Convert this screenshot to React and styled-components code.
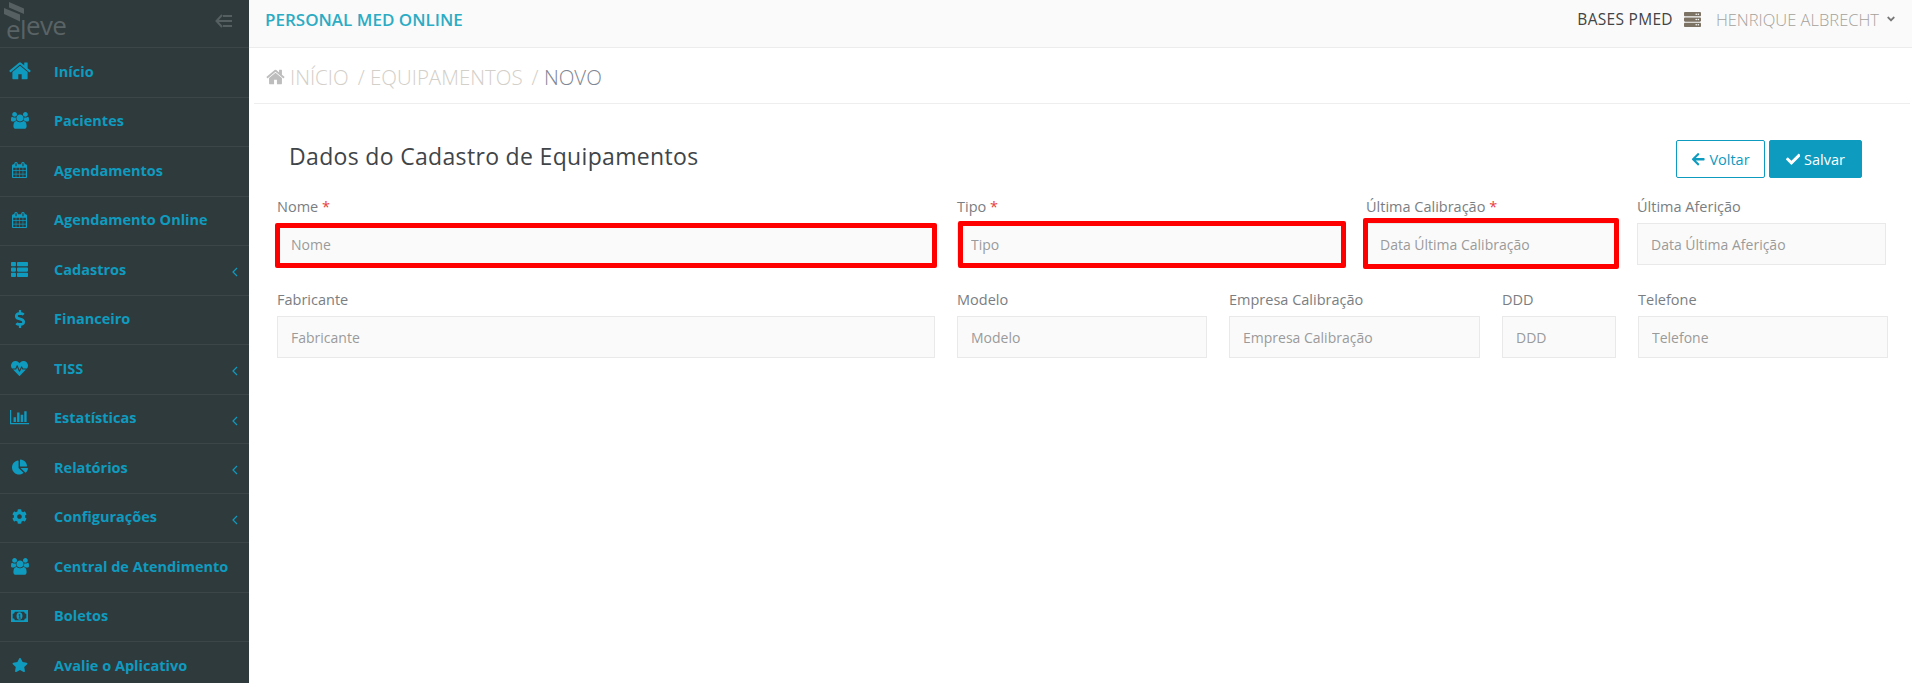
import styled, { createGlobalStyle } from "styled-components";
import {
  FaThList,
  FaDollarSign,
  FaHeartbeat,
  FaChartPie,
  FaCog,
  FaStar,
  FaAngleDown,
  FaArrowLeft,
  FaCheck,
  FaServer,
} from "react-icons/fa";

const GlobalStyle = createGlobalStyle`
  html, body {
    margin: 0;
    padding: 0;
    background: #fff;
  }
  body {
    font-family: "Open Sans", "Liberation Sans", sans-serif;
  }
  * {
    box-sizing: border-box;
  }
`;

const Shell = styled.div`
  display: flex;
  width: 100vw;
  height: 100vh;
  overflow: hidden;
`;

const Sidebar = styled.aside`
  flex: 0 0 249px;
  background: #2f3a3c;
  overflow: hidden;
`;

const Brand = styled.div`
  height: 48px;
  display: flex;
  align-items: flex-start;
  justify-content: space-between;
  padding: 2px 16px 0 4px;
  border-bottom: 1px solid #3c4648;
`;

const LogoWrap = styled.div`
  position: relative;
  width: 58px;
  height: 34px;
`;

const LogoMark = styled.svg`
  position: absolute;
  left: 0;
  top: 0;
`;

const LogoText = styled.span`
  position: absolute;
  left: 2px;
  top: 8px;
  font-size: 26px;
  line-height: 30px;
  letter-spacing: -0.6px;
  color: #5a6365;
`;

const LogoDrop = styled.span`
  position: relative;
  top: 4px;
`;

const CollapseIcon = styled.svg`
  margin-top: 12px;
`;

const NavRow = styled.a`
  display: flex;
  align-items: center;
  height: 49.5px;
  border-bottom: 1px solid #3c4648;
  padding: 0 11px 2px 0;
  color: #0f9bbf;
  font-size: 14.5px;
  font-weight: 700;
  text-decoration: none;
`;

const NavIcon = styled.span`
  flex: 0 0 39px;
  margin-right: 15px;
  display: flex;
  justify-content: center;
`;

const NavLabel = styled.span`
  flex: 1;
  white-space: nowrap;
`;

const NavArrow = styled.svg`
  margin-top: 6px;
`;

const Main = styled.main`
  flex: 1;
  min-width: 0;
  display: flex;
  flex-direction: column;
`;

const Topbar = styled.header`
  height: 48px;
  flex: none;
  display: flex;
  align-items: center;
  justify-content: space-between;
  padding: 0 15px 9px 16px;
  background: #fafafa;
  border-bottom: 1px solid #ececec;
`;

const AppName = styled.span`
  color: #2bacc4;
  font-size: 17px;
  font-weight: 600;
`;

const TopRight = styled.div`
  display: flex;
  align-items: center;
  font-size: 15.5px;
  letter-spacing: 0.3px;
  color: #444;
`;

const ServerIcon = styled(FaServer)`
  color: #7d7365;
  font-size: 17px;
  margin: 0 15px 0 11px;
`;

const UserName = styled.span`
  color: #a5a29c;
  font-size: 16.5px;
  letter-spacing: 0;
  font-weight: 300;
`;

const UserCaret = styled(FaAngleDown)`
  color: #777;
  font-size: 12px;
  margin-left: 6px;
`;

const Crumbs = styled.nav`
  height: 56px;
  flex: none;
  margin: 0 2px 0 5px;
  padding: 2px 0 0 12px;
  display: flex;
  align-items: center;
  gap: 5px;
  border-bottom: 1px solid #eee;
  font-size: 20.5px;
  font-weight: 300;
  color: #d3cfc9;
`;

const CrumbHome = styled.svg`
  width: 19px;
  height: 20px;
  fill: #bdbdbd;
`;

const CrumbSep = styled.span`
  margin-left: 4px;
`;

const CrumbCurrent = styled.span`
  color: #7f8694;
`;

const Panel = styled.section`
  padding: 36px 24px 0 28px;
`;

const PanelHead = styled.div`
  display: flex;
  justify-content: space-between;
  height: 59px;
  padding: 0 26px 0 12px;
`;

const Title = styled.h2`
  margin: 0;
  font-size: 23px;
  line-height: 32px;
  letter-spacing: 0.33px;
  font-weight: 400;
  color: #3f4548;
`;

const Actions = styled.div`
  display: flex;
  gap: 4px;
`;

const Button = styled.button`
  height: 38px;
  display: flex;
  align-items: center;
  gap: 4px;
  padding: 0 ${(props) => (props.$primary ? 16 : 14)}px;
  border: 1px solid #0d9bbf;
  border-radius: 2px;
  font: inherit;
  font-size: 14.5px;
  background: ${(props) => (props.$primary ? "#0d9bbf" : "#fff")};
  color: ${(props) => (props.$primary ? "#fff" : "#0d9bbf")};
`;

const FormRow = styled.div`
  display: flex;
  gap: 22px;
  margin-bottom: 27px;
`;

const Field = styled.div`
  flex: 0 0 ${(props) => props.$width}px;
`;

const Label = styled.label`
  display: block;
  height: 16px;
  margin-bottom: 8px;
  font-size: 14.5px;
  line-height: 16px;
  color: #7a7e82;
  white-space: nowrap;
`;

const Required = styled.span`
  color: #e8403f;
`;

const InputWrap = styled.div`
  position: relative;
`;

const Input = styled.input`
  display: block;
  width: 100%;
  height: 42px;
  padding: 0 13px;
  border: 1px solid #e9e9e9;
  background: #fafafa;
  font: inherit;
  font-size: 14px;
  color: #555;
  outline: none;

  &::placeholder {
    color: #9a9a9a;
    opacity: 1;
  }
`;

const Highlight = styled.div`
  position: absolute;
  left: ${(props) => props.$left}px;
  right: ${(props) => props.$right}px;
  top: ${(props) => props.$top}px;
  bottom: ${(props) => props.$bottom}px;
  border: 5px solid #ff0000;
  border-radius: 2px;
  pointer-events: none;
`;

const homePath =
  "M1408 992v480q0 26-19 45t-45 19h-384v-384h-256v384h-384q-26 0-45-19t-19-45v-480q0-1 .5-3t.5-3l575-474 575 474q1 2 1 6zm223-69l-62 74q-8 9-21 11h-3q-13 0-21-7l-692-577-692 577q-12 8-24 7-13-2-21-11l-62-74q-8-10-7-23.500t11-21.500l719-599q32-26 76-26t76 26l244 204v-195q0-14 9-23t23-9h192q14 0 23 9t9 23v408l219 182q10 8 11 21.500t-7 23.500z";

function DrawnIcon({ width, box, path }) {
  return (
    <svg width={width} viewBox={box} fill="currentColor">
      <path d={path} />
    </svg>
  );
}

const HomeIcon = () => <DrawnIcon width={22} box="0 0 1664 1792" path={homePath} />;

const UsersIcon = () => (
  <DrawnIcon
    width={18}
    box="0 0 1920 1792"
    path="M593 896q-162 5-265 128h-134q-82 0-138-40.500t-56-118.500q0-353 124-353 6 0 43.500 21t97.500 42.500 119 21.500q67 0 133-23-5 37-5 66 0 139 81 256zm1071 637q0 120-73 189.500t-194 69.500h-874q-121 0-194-69.500t-73-189.500q0-53 3.500-103.500t14-109 26.500-108.500 43-97.500 62-81 85.500-53.500 111.500-20q10 0 43 21.500t73 48 107 48 135 21.500 135-21.500 107-48 73-48 43-21.500q61 0 111.500 20t85.500 53.500 62 81 43 97.500 26.500 108.500 14 109 3.500 103.500zm-1024-1277q0 106-75 181t-181 75-181-75-75-181 75-181 181-75 181 75 75 181zm704 384q0 159-112.500 271.500t-271.500 112.500-271.500-112.500-112.500-271.500 112.500-271.500 271.500-112.500 271.500 112.500 112.500 271.500zm576 225q0 78-56 118.500t-138 40.500h-134q-103-123-265-128 81-117 81-256 0-29-5-66 66 23 133 23 59 0 119-21.500t97.500-42.500 43.500-21q124 0 124 353zm-128-609q0 106-75 181t-181 75-181-75-75-181 75-181 181-75 181 75 75 181z"
  />
);

const CalendarIcon = () => (
  <DrawnIcon
    width={15}
    box="0 0 1664 1792"
    path="M128 1664h288v-288h-288v288zm352 0h320v-288h-320v288zm-352-352h288v-320h-288v320zm352 0h320v-320h-320v320zm-352-384h288v-288h-288v288zm736 736h320v-288h-320v288zm-384-736h320v-288h-320v288zm768 736h288v-288h-288v288zm-384-352h320v-320h-320v320zm-352-864v-288q0-13-9.500-22.500t-22.500-9.500h-64q-13 0-22.500 9.500t-9.500 22.500v288q0 13 9.500 22.500t22.500 9.500h64q13 0 22.500-9.500t9.500-22.500zm736 864h288v-320h-288v320zm-384-384h320v-288h-320v288zm384 0h288v-288h-288v288zm32-480v-288q0-13-9.500-22.500t-22.500-9.500h-64q-13 0-22.500 9.500t-9.500 22.500v288q0 13 9.500 22.500t22.500 9.500h64q13 0 22.500-9.500t9.500-22.500zm384-64v1280q0 52-38 90t-90 38h-1408q-52 0-90-38t-38-90v-1280q0-52 38-90t90-38h128v-96q0-66 47-113t113-47h64q66 0 113 47t47 113v96h384v-96q0-66 47-113t113-47h64q66 0 113 47t47 113v96h128q52 0 90 38t38 90z"
  />
);

const BarsIcon = () => (
  <DrawnIcon
    width={19}
    box="0 128 2048 1664"
    path="M640 896v512h-256v-512h256zm384-512v1024h-256v-1024h256zm1024 1152v128h-2048v-1536h128v1408h1920zm-640-896v768h-256v-768h256zm384-384v1152h-256v-1152h256z"
  />
);

const MoneyIcon = () => (
  <svg width="17" height="12" viewBox="0 0 20 14" fill="currentColor">
    <path
      fillRule="evenodd"
      d="M0 0h20v14H0zM4.500 2a2.500 2.500 0 0 1-2.500 2.500v5A2.500 2.500 0 0 1 4.500 12h11a2.500 2.500 0 0 1 2.500-2.500v-5A2.500 2.500 0 0 1 15.500 2z"
    />
    <path fillRule="evenodd" d="M10 2.500c2.200 0 3.500 2 3.500 4.500s-1.300 4.500-3.500 4.500S6.500 9.500 6.500 7s1.300-4.500 3.500-4.500zM9 5.500v1h.7v2.500H9v1h2.600V9h-.8V4.500h-.9z" />
  </svg>
);

const navItems = [
  { icon: <HomeIcon />, label: "Início" },
  { icon: <UsersIcon />, label: "Pacientes" },
  { icon: <CalendarIcon />, label: "Agendamentos" },
  { icon: <CalendarIcon />, label: "Agendamento Online" },
  { icon: <FaThList size={17} />, label: "Cadastros", arrow: true },
  { icon: <FaDollarSign size={18} />, label: "Financeiro" },
  { icon: <FaHeartbeat size={17} />, label: "TISS", arrow: true },
  { icon: <BarsIcon />, label: "Estatísticas", arrow: true },
  { icon: <FaChartPie size={16} />, label: "Relatórios", arrow: true },
  { icon: <FaCog size={15} />, label: "Configurações", arrow: true },
  { icon: <UsersIcon />, label: "Central de Atendimento" },
  { icon: <MoneyIcon />, label: "Boletos" },
  { icon: <FaStar size={16} />, label: "Avalie o Aplicativo" },
];

const firstRow = [
  {
    label: "Nome",
    placeholder: "Nome",
    width: 658,
    required: true,
    mark: { left: -2, top: 0, bottom: -3, right: -2 },
  },
  {
    label: "Tipo",
    placeholder: "Tipo",
    width: 387,
    required: true,
    mark: { left: 1, top: -2, bottom: -3, right: -2 },
  },
  {
    label: "Última Calibração",
    placeholder: "Data Última Calibração",
    width: 249,
    required: true,
    mark: { left: -3, top: -5, bottom: -4, right: -4 },
  },
  { label: "Última Aferição", placeholder: "Data Última Aferição", width: 249 },
];

const secondRow = [
  { label: "Fabricante", placeholder: "Fabricante", width: 658 },
  { label: "Modelo", placeholder: "Modelo", width: 250 },
  { label: "Empresa Calibração", placeholder: "Empresa Calibração", width: 251 },
  { label: "DDD", placeholder: "DDD", width: 114 },
  { label: "Telefone", placeholder: "Telefone", width: 250 },
];

function FormField({ label, placeholder, width, required, mark }) {
  return (
    <Field $width={width}>
      <Label>
        {label} {required && <Required>*</Required>}
      </Label>
      <InputWrap>
        <Input placeholder={placeholder} />
        {mark && (
          <Highlight $left={mark.left} $top={mark.top} $bottom={mark.bottom} $right={mark.right} />
        )}
      </InputWrap>
    </Field>
  );
}

export default function App() {
  return (
    <>
      <GlobalStyle />
      <Shell>
        <Sidebar>
          <Brand>
            <LogoWrap>
              <LogoText>
                <LogoDrop>el</LogoDrop>eve
              </LogoText>
              <LogoMark width="24" height="24" viewBox="0 0 24 24" fill="#565f61">
                <path d="M5 0l15 6.500V12L5 5.500zM0 6l16 6.500v7L0 12z" />
              </LogoMark>
            </LogoWrap>
            <CollapseIcon width="18" height="14" viewBox="0 0 18 14" fill="none" stroke="#555f61" strokeWidth="2">
              <path d="M7 1L1.500 7 7 13M2 7h15M8 2h9M8 12h9" />
            </CollapseIcon>
          </Brand>
          {navItems.map(({ icon, label, arrow }) => (
            <NavRow key={label}>
              <NavIcon>{icon}</NavIcon>
              <NavLabel>{label}</NavLabel>
              {arrow && (
                <NavArrow width="6" height="10" viewBox="0 0 6 10" fill="none" stroke="currentColor" strokeWidth="1.2">
                  <path d="M5 1L1 5l4 4" />
                </NavArrow>
              )}
            </NavRow>
          ))}
        </Sidebar>
        <Main>
          <Topbar>
            <AppName>PERSONAL MED ONLINE</AppName>
            <TopRight>
              BASES PMED
              <ServerIcon />
              <UserName>HENRIQUE ALBRECHT</UserName>
              <UserCaret />
            </TopRight>
          </Topbar>
          <Crumbs>
            <CrumbHome viewBox="0 0 1664 1792">
              <path d={homePath} />
            </CrumbHome>
            <span>INÍCIO</span>
            <CrumbSep>/ EQUIPAMENTOS</CrumbSep>
            <CrumbSep>
              / <CrumbCurrent>NOVO</CrumbCurrent>
            </CrumbSep>
          </Crumbs>
          <Panel>
            <PanelHead>
              <Title>Dados do Cadastro de Equipamentos</Title>
              <Actions>
                <Button>
                  <FaArrowLeft /> Voltar
                </Button>
                <Button $primary>
                  <FaCheck /> Salvar
                </Button>
              </Actions>
            </PanelHead>
            <FormRow>
              {firstRow.map((field) => (
                <FormField key={field.label} {...field} />
              ))}
            </FormRow>
            <FormRow>
              {secondRow.map((field) => (
                <FormField key={field.label} {...field} />
              ))}
            </FormRow>
          </Panel>
        </Main>
      </Shell>
    </>
  );
}
